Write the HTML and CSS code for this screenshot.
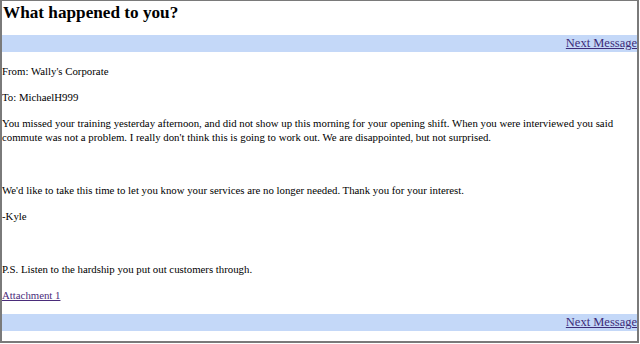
FILE: index.html
```html
<!DOCTYPE html>
<html lang="en">
<head>
  <meta charset="UTF-8"/>
  <title>What happened to you?</title>
  <link rel="stylesheet" href="styles.css">
</head>
<body>

  <div class="frame">
    <h1 class="subject">What happened to you?</h1>

    <div class="navbar"><a href="#">Next Message</a></div>

    <div class="message">
      <p>From: Wally's Corporate</p>
      <p>To: MichaelH999</p>
      <p>You missed your training yesterday afternoon, and did not show up this morning for your opening shift. When you were interviewed you said commute was not a problem. I really don't think this is going to work out. We are disappointed, but not surprised.</p>
      <p class="spacer">&nbsp;</p>
      <p>We'd like to take this time to let you know your services are no longer needed. Thank you for your interest.</p>
      <p>-Kyle</p>
      <p class="spacer">&nbsp;</p>
      <p>P.S. Listen to the hardship you put out customers through.</p>
      <p><a href="#" class="attach">Attachment 1</a></p>
    </div>

    <div class="navbar"><a href="#">Next Message</a></div>
  </div>

</body>
</html>
```

FILE: styles.css
```css
html, body {
  margin:0; padding:0; background:#fff;
  font-family:"Liberation Serif", "Times New Roman", serif;
}

.frame {
  width:639px; height:343px; box-sizing:border-box;
  border:2px solid #7a7a7a; border-top-width:1px;
  overflow:hidden; color:#000;
}

.subject {
  margin:0 0 10px; padding-left:1px;
  font-size:17.2px; line-height:24px; font-weight:bold;
}

.navbar {
  height:17px; line-height:17px;
  background:#c4d8f8; text-align:right;
  font-size:12.5px;
}
.navbar a { color:#3d2c78; }

.message { font-size:10.8px; line-height:14px; }
.message p { margin:12px 0; }
.message .spacer { line-height:15px; }
.attach { color:#4a2c7a; }
```
